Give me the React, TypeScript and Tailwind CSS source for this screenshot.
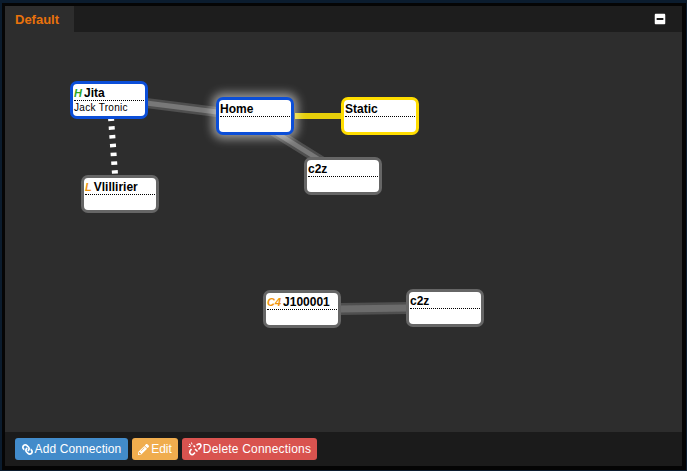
import { FaLink, FaPencilAlt, FaMinusSquare } from 'react-icons/fa';

interface MapNode {
  id: string;
  name: string;
  x: number;
  y: number;
  border: string;
  glow?: boolean;
  prefix?: string;
  prefixColor?: string;
  owner?: string;
}

// coordinates are relative to the map canvas
const nodes: MapNode[] = [
  { id: 'jita', name: 'Jita', x: 65, y: 49, border: 'border-[#0b4ed8]', prefix: 'H', prefixColor: 'text-[#2fa51f]', owner: 'Jack Tronic' },
  { id: 'home', name: 'Home', x: 211, y: 65, border: 'border-[#0b4ed8]', glow: true },
  { id: 'static', name: 'Static', x: 336, y: 65, border: 'border-[#ffdd00]' },
  { id: 'c2z-a', name: 'c2z', x: 299, y: 125, border: 'border-[#666666]' },
  { id: 'vlillirier', name: 'Vlillirier', x: 76, y: 143, border: 'border-[#666666]', prefix: 'L', prefixColor: 'text-[#f0960e]' },
  { id: 'j100001', name: 'J100001', x: 258, y: 258, border: 'border-[#666666]', prefix: 'C4', prefixColor: 'text-[#f0960e]' },
  { id: 'c2z-b', name: 'c2z', x: 401, y: 257, border: 'border-[#666666]' },
];

function Connections() {
  return (
    <svg className="absolute inset-0 w-full h-full" fill="none">
      <path d="M141 71 L212 80" stroke="#4f4f4f" strokeWidth="10" />
      <path d="M141 71 L212 80" stroke="#787878" strokeWidth="5" />
      <path d="M290 84 L337 84" stroke="#e6cf0a" strokeWidth="6" />
      <path d="M265 97 L318 130" stroke="#4f4f4f" strokeWidth="10" />
      <path d="M265 97 L318 130" stroke="#787878" strokeWidth="5" />
      <path d="M106 85.5 L110 142" stroke="#ffffff" strokeWidth="6" strokeDasharray="3.5 5.3" />
      <path d="M335 277 L403 276" stroke="#4f4f4f" strokeWidth="12" />
      <path d="M335 277 L403 276" stroke="#6c6c6c" strokeWidth="7" />
    </svg>
  );
}

function UnlinkIcon() {
  return (
    <svg viewBox="0 0 14 14" className="w-[14px] h-[14px]" fill="none" stroke="currentColor">
      <path d="M5.5 3.5 L7 5 M3.5 7 L2 9 C1 11 3 13 5 12.5 L7 10.5" strokeWidth="1.6" />
      <path d="M7 7 L9.5 9.5 M8.5 3 L10.5 2 C12.5 1.5 13.5 3.5 12.5 5 L10.5 7.5" strokeWidth="1.6" />
      <path d="M1 2 L3 3.5 M3.5 0.5 L4 2.5 M0.5 4.5 L2.5 4.5" strokeWidth="1" />
    </svg>
  );
}

function Node({ node }: { node: MapNode }) {
  return (
    <div
      className={`absolute w-[78px] h-[38px] bg-white border-[3px] rounded-[7px] px-[1px] ${node.border} ${node.glow ? 'shadow-[0_0_10px_4px_rgba(255,255,255,0.5)]' : ''}`}
      style={{ left: node.x, top: node.y }}
    >
      <div className="h-[17px] leading-[18px] text-[12px] font-bold text-black border-b border-dotted border-black whitespace-nowrap">
        {node.prefix && <span className={`italic font-bold text-[11px] mr-[2px] ${node.prefixColor}`}>{node.prefix}</span>}
        {node.name}
      </div>
      {node.owner && <div className="text-[10px] leading-[13px] text-black tracking-[0.3px] whitespace-nowrap">{node.owner}</div>}
    </div>
  );
}

export default function App() {
  return (
    <div className="w-[687px] h-[471px] bg-[#0b1c2e] pt-[3px] pl-[2px] pr-[1px] pb-[1px] font-['Liberation_Sans',Arial,sans-serif]">
      <div className="w-full h-full bg-[#050505] pt-[3px] pl-[3px] pr-[4px] pb-[4px]">
        <div className="w-full h-full flex flex-col bg-[#2d2d2d]">
          <div className="h-[26px] shrink-0 flex items-stretch justify-between bg-[#1d1d1d]">
            <div className="w-[69px] bg-[#2d2d2d] pl-[10px] leading-[27px] text-[13px] font-bold text-[#e8720c]">Default</div>
            <div className="flex items-center pr-[16px]">
              <FaMinusSquare className="w-[12px] h-[12px] text-white" />
            </div>
          </div>
          <div className="relative flex-1">
            <Connections />
            {nodes.map((node) => (
              <Node key={node.id} node={node} />
            ))}
          </div>
          <div className="h-[34px] shrink-0 flex items-center gap-[4px] bg-[#1b1b1b] pl-[10px]">
            <button className="h-[22px] w-[113px] flex items-center justify-center gap-[2px] rounded-[3px] bg-[#428bca] text-[12px] tracking-[0.1px] text-white">
              <FaLink className="w-[11px] h-[11px] -scale-x-100" /> Add Connection
            </button>
            <button className="h-[22px] w-[46px] flex items-center justify-center gap-[2px] rounded-[3px] bg-[#f0ad4e] text-[12px] text-white">
              <FaPencilAlt className="w-[11px] h-[11px]" /> Edit
            </button>
            <button className="h-[22px] w-[135px] flex items-center justify-center gap-[1px] rounded-[3px] bg-[#d9534f] text-[12px] tracking-[0.2px] text-white">
              <UnlinkIcon /> Delete Connections
            </button>
          </div>
        </div>
      </div>
    </div>
  );
}
